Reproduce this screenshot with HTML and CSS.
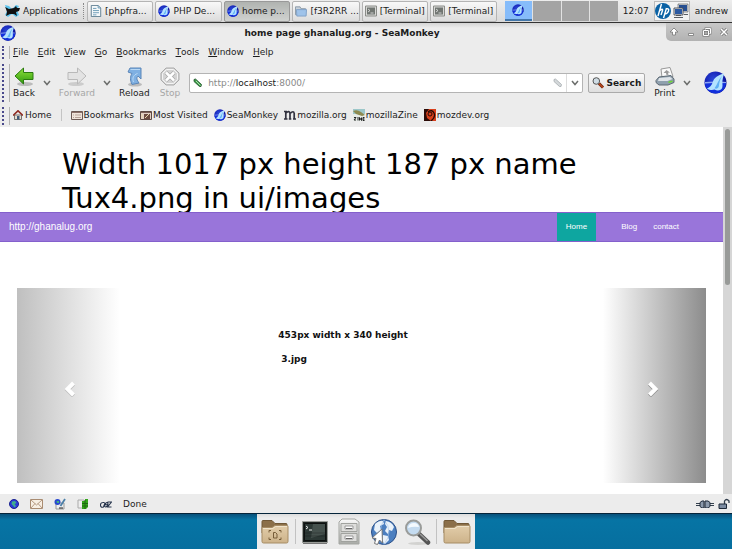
FILE: index.html
```html
<!DOCTYPE html>
<html lang="en">
<head>
<meta charset="utf-8">
<title>home page ghanalug.org - SeaMonkey</title>
<link rel="stylesheet" href="styles.css">
</head>
<body>
<svg class="defs" aria-hidden="true">
  <defs>
    <radialGradient id="sea" cx=".4" cy=".35" r=".7"><stop offset="0" stop-color="#2a48d8"/><stop offset=".6" stop-color="#1420b4"/><stop offset="1" stop-color="#0a0a78"/></radialGradient>
    <linearGradient id="green" x2="0" y2="1"><stop offset="0" stop-color="#8fe23c"/><stop offset="1" stop-color="#2f9a0c"/></linearGradient>
    <linearGradient id="tan" x2="0" y2="1"><stop offset="0" stop-color="#e2cdaa"/><stop offset="1" stop-color="#cdb38a"/></linearGradient>
    <linearGradient id="steel" x2="0" y2="1"><stop offset="0" stop-color="#fafafa"/><stop offset="1" stop-color="#a8aaa6"/></linearGradient>
  </defs>
  <symbol id="seamonkey" viewBox="0 0 24 24">
    <circle cx="12" cy="12" r="11.5" fill="url(#sea)"/>
    <path d="M1 12.500h22a11 11 0 0 1-22 0z" fill="#1230dc"/>
    <path d="M1 11.500l10-.5-1 1.500-9 .5zM17 11l6 .5v1l-7 .3z" fill="#8ea6f2"/>
    <path d="M21 2.500C15 4 10 7 9 12c-1 3-3 5-6 6.500 3 1.500 6 1.500 8 .8 3 2 7 1 8-1.800 1-3-.5-6 .5-9 .5-2.500 1-4 1.500-6z" fill="#b4e2ff"/>
    <path d="M19 5c-4 4-5 9-8 13 2 1 4 0 4.500-2 .5-4 1-7 3.500-11z" fill="#5fb0f4"/>
  </symbol>
  <symbol id="mouse" viewBox="0 0 16 16">
    <path d="M1 2l4 1 3 3 4-4 3 1-2 4 2 5-3 2-4-3-4 3-3-2 2-4z" fill="#5cc4ee"/>
    <path d="M1 4l4 2 5-1 2-2 1 2 3 0-1 3-3 1 1 4-3-2-4 0-4 2 1-4-1-3z" fill="#111"/>
  </symbol>
  <symbol id="document" viewBox="0 0 12 14">
    <path d="M.5.500h8l3 3v10H.500z" fill="#f4f8fa" stroke="#4f7388"/>
    <path d="M8.500.500v3h3M2.500 4h4M2.500 6.500h7M2.500 9h7M2.500 11.500h4" fill="none" stroke="#5f92b0"/>
  </symbol>
  <symbol id="bluefolder" viewBox="0 0 13 12">
    <path d="M.5 10V1.500h5l1 2h5v7z" fill="#c9d2da" stroke="#8796a4"/>
    <path d="M1.500 4.500h11l-.5 7H2z" fill="#9fc3ea" stroke="#7fa0c6"/>
  </symbol>
  <symbol id="term" viewBox="0 0 12 11">
    <path d="M.5.500h11v10H.500z" fill="#d8d8d6" stroke="#8a8c88"/><path d="M2 2h8v7H2z" fill="#717672"/><path d="M3 3.500l2 1.500-2 1.500M5.500 7.500h3" fill="none" stroke="#e8e8e8" stroke-width=".8"/>
  </symbol>
  <symbol id="chevron" viewBox="0 0 8 6"><path d="M1 1l3 3.500L7 1" fill="none" stroke="#6c6e6c" stroke-width="1.500"/></symbol>
  <symbol id="folder" viewBox="0 0 28 26">
    <path d="M1 14V2.500q0-1 1-1h9l3 3h11q1 0 1 1V14z" fill="#8b6f49" stroke="#705837"/>
    <path d="M1 8.500h10l3-2h12q1 0 1 1v15q0 1.500-1.500 1.500h-23Q1 24 1 22.500z" fill="url(#tan)" stroke="#a68c64"/>
    <path d="M2 9.500h10l2.500-2h11.500" fill="none" stroke="#f0e3ca"/>
  </symbol>
</svg>

<header class="panel">
  <button class="apps"><svg class="i16"><use href="#mouse"/></svg>Applications</button>
  <nav class="tasks" aria-label="Open windows">
    <button><svg class="i12"><use href="#document"/></svg>[phpfra...</button>
    <button><svg class="i12"><use href="#seamonkey"/></svg>PHP De...</button>
    <button class="active"><svg class="i12"><use href="#seamonkey"/></svg>home p...</button>
    <button><svg class="i12"><use href="#bluefolder"/></svg>[f3R2RR ...</button>
    <button><svg class="i12"><use href="#term"/></svg>[Terminal]</button>
    <button><svg class="i12"><use href="#term"/></svg>[Terminal]</button>
  </nav>
  <div class="pager"><span class="current"><svg class="i12"><use href="#seamonkey"/></svg></span><span></span><span></span><span></span></div>
  <time>12:07</time>
  <div class="tray">
    <svg class="i16" viewBox="0 0 16 16"><circle cx="8" cy="8" r="8" fill="#0b62a4"/><path d="M6.500 1L3 13M5 7.500q3-2.500 2.500 0L6 12M11.500 5L8.500 15M11 6q3.500-1 2.500 2t-4 3" fill="none" stroke="#fff" stroke-width="1.400"/></svg>
    <svg class="i16" viewBox="0 0 16 16"><path d="M5.500 1.500h9v7h-9z" fill="#254e92" stroke="#d5d9dc"/><path d="M5 1h10v8H5z" fill="none" stroke="#555" stroke-width=".6"/><path d="M1.500 5.500h8v6h-8z" fill="#2c5aa2" stroke="#e8e8e8"/><path d="M1 5h9v7H1zM3 12.500h5M1 14.500h9M11 11.500h4" fill="none" stroke="#454b52" stroke-width=".9"/></svg>
  </div>
  <span class="user">andrew</span>
</header>

<section class="window">
  <div class="titlebar">
    <svg class="i16"><use href="#seamonkey"/></svg>
    <h1>home page ghanalug.org - SeaMonkey</h1>
    <div class="controls">
      <button aria-label="Shade"><svg class="i10" viewBox="0 0 10 10"><path d="M5 1l4 4H6.500v3h-3V5H1z" fill="#fff" stroke="#777" stroke-width=".8"/></svg></button>
      <button aria-label="Minimize"><svg class="i10" viewBox="0 0 10 10"><path d="M2.500 6.500h5v2h-5z" fill="#fff" stroke="#777" stroke-width=".8"/></svg></button>
      <button aria-label="Restore"><svg class="i10" viewBox="0 0 10 10"><path d="M3.500 1.500h5v5h-5z" fill="none" stroke="#777" stroke-width="1.800"/><path d="M3.500 1.500h5v5h-5z" fill="none" stroke="#fff"/><path d="M1.500 3.500h5v5h-5z" fill="#aaa" stroke="#666" stroke-width="1.800"/><path d="M1.500 3.500h5v5h-5z" fill="none" stroke="#fff"/></svg></button>
      <button aria-label="Close"><svg class="i10" viewBox="0 0 10 10"><path d="M2 2l6 6M8 2L2 8" stroke="#707070" stroke-width="3"/><path d="M2 2l6 6M8 2L2 8" stroke="#fff" stroke-width="1.500"/></svg></button>
    </div>
  </div>

  <nav class="menubar grip" aria-label="Menu">
    <button><u>F</u>ile</button><button><u>E</u>dit</button><button><u>V</u>iew</button><button><u>G</u>o</button><button><u>B</u>ookmarks</button><button><u>T</u>ools</button><button><u>W</u>indow</button><button><u>H</u>elp</button>
  </nav>

  <div class="toolbar grip">
    <button class="tool"><svg class="i20" viewBox="0 0 20 20"><ellipse cx="11" cy="17" rx="8" ry="2" fill="#bbb"/><path d="M1 9l8.500-8v4.500H19v7H9.500V17z" fill="url(#green)" stroke="#2a7a10"/></svg>Back</button>
    <button class="drop" aria-label="Back history"><svg class="chev"><use href="#chevron"/></svg></button>
    <button class="tool off forward"><svg class="i20" viewBox="0 0 20 20"><ellipse cx="9" cy="17" rx="8" ry="2" fill="#ccc"/><path d="M19 9l-8.500-8v4.500H1v7h9.500V17z" fill="#e3e3e3" stroke="#b9b9b9"/></svg>Forward</button>
    <button class="drop" aria-label="Forward history"><svg class="chev"><use href="#chevron"/></svg></button>
    <button class="tool reload"><svg class="i20" viewBox="0 0 20 20"><ellipse cx="11" cy="17.500" rx="7" ry="2" fill="#bbb"/><path d="M4 5l2-4h11v11l-3-3c-2 2-1 4 1 7l-7 1.500c-2-4-2-8 0-11z" fill="#7fb0e2" stroke="#5b86b8"/><path d="M6.500 2.500H16M9.500 15c-1.500-4 0-7 4-8.500" fill="none" stroke="#b9d8f4"/></svg>Reload</button>
    <button class="tool off stop"><svg class="i20" viewBox="0 0 20 20"><path d="M6 1h8l5 5v7l-5 5H6l-5-5V6z" fill="#d4d4d4" stroke="#aaa"/><path d="M6.500 2.500h7L17.500 6.500v6l-4 4h-7l-4-4v-6z" fill="none" stroke="#f4f4f4"/><path d="M6 5.500l8 8M14 5.500l-8 8" stroke="#aaa" stroke-width="4"/><path d="M6 5.500l8 8M14 5.500l-8 8" stroke="#fff" stroke-width="2.500"/></svg>Stop</button>
    <div class="address">
      <svg class="i10" viewBox="0 0 10 10"><path d="M1 1.500l1.500-.5 6 5.500-.5 2-1.500 0L1 3.500z" fill="#3f9d4b" stroke="#1f4f2a" stroke-width=".8"/><path d="M3 3l4.500 4.500" stroke="#a8e0a8"/></svg>
      <label class="url"><span class="url-text" aria-hidden="true">http://<b>localhost</b>:8000/</span><input type="text" aria-label="Address" value="http://localhost:8000/"></label>
      <svg class="i10" viewBox="0 0 10 10"><path d="M1 1.500l1.500-.5 6 5.500-.5 2-1.500 0L1 3.500z" fill="#d4d8da" stroke="#a5abae" stroke-width=".8"/></svg>
      <button class="drop" aria-label="Show history"><svg class="chev"><use href="#chevron"/></svg></button>
    </div>
    <button class="search"><svg class="i12" viewBox="0 0 12 12"><path d="M7 6.500l4 4" stroke="#5a1d0a" stroke-width="3"/><path d="M7 6.500l4 4" stroke="#b1441c" stroke-width="1.800"/><circle cx="4.300" cy="4" r="3.300" fill="#cfdce4" stroke="#555"/></svg>Search</button>
    <button class="tool print"><svg class="i20" viewBox="0 0 20 20"><path d="M6 2l9-1.500 3 9-11 1z" fill="#fafafa" stroke="#999"/><path d="M8.500 6l3-3 3.500 2.500-2 .3.5 2-2 .3-.5-2z" fill="#9a9a9a"/><path d="M4 10l12-1.500 3 3.500v3.500L13 18H4l-3-2.500v-2z" fill="#8fa0ae" stroke="#5e6a74"/><path d="M4 11l11-1 2.500 2-5 2H3z" fill="#dfe4e8"/><path d="M13.500 14.500l4-1v1.500l-4 1z" fill="#6cdc2c"/></svg>Print</button>
    <button class="drop" aria-label="Print options"><svg class="chev"><use href="#chevron"/></svg></button>
    <svg class="throbber"><use href="#seamonkey"/></svg>
  </div>

  <nav class="bookmarks grip" aria-label="Bookmarks">
    <a href="#" class="home"><svg class="i10" viewBox="0 0 10 10"><path d="M1.500 5h7v4.500h-7z" fill="#e9ddd0" stroke="#555" stroke-width=".8"/><path d="M0 5.500L5 .8l5 4.700" fill="none" stroke="#8e2820" stroke-width="1.600"/><path d="M4 6h2.500v3.500H4z" fill="#3e5878"/></svg>Home</a>
    <a href="#"><svg class="i12" viewBox="0 0 12 12"><path d="M.5 2.500h11v8H.500z" fill="#f0e4da" stroke="#6d5a54"/><path d="M1 3.500h10" stroke="#8c6f68"/><path d="M2 6h1M4 6h6M2 8.500h1M4 8.500h6" stroke="#b7a298"/></svg>Bookmarks</a>
    <a href="#"><svg class="i12" viewBox="0 0 12 12"><path d="M.5 2.500h11v8H.500z" fill="#e0cfc4" stroke="#5d4a44"/><path d="M1 3.500h10" stroke="#7c5f58"/><path d="M4 5h6v5H4z" fill="#6b4a40"/><path d="M5 9l4-4M2 5v4" stroke="#e8d8b0"/></svg>Most Visited</a>
    <a href="#"><svg class="i12"><use href="#seamonkey"/></svg>SeaMonkey</a>
    <a href="#"><svg class="i12" viewBox="0 0 12 12"><path d="M0 2.500h3M1.800 2v8M0 10h3.500M6 4v6M4.800 10h2.500M10.200 4v6M9 10h3M1.800 4Q5.500 1 6 4.500 9.700 1 10.200 4.500" fill="none" stroke="#333340" stroke-width="1.700"/></svg>mozilla.org</a>
    <a href="#"><svg class="i12" viewBox="0 0 12 12"><path d="M0 0h12v12H0z" fill="#e6ece8"/><path d="M0 0h12v5H0z" fill="#9cc7c9"/><path d="M0 2q4-2 8 1l4 3-3 1-6-2z" fill="#8d8a50"/><path d="M1 8.500h2l-2 2.500h2M5 8v3.500M6.500 11.500v-3l2 3v-3M11.500 8.500H10v3h1.500M10 10h1.500" fill="none" stroke="#222"/></svg>mozillaZine</a>
    <a href="#"><svg class="i12" viewBox="0 0 12 12"><path d="M0 0h12v12H0z" fill="#d8401c"/><path d="M0 0h5L2 4l1 5 4 3H0z" fill="#2a0b07"/><path d="M4 3q4-3 6 1t-3 8" fill="none" stroke="#230a06" stroke-width="1.300"/><circle cx="6" cy="5" r="2" fill="none" stroke="#230a06"/></svg>mozdev.org</a>
  </nav>

  <div class="viewport">
    <main class="page">
      <h2>Width 1017 px height 187 px name Tux4.png in ui/images</h2>
      <nav class="sitenav" aria-label="Site">
        <a href="#" class="brand">http://ghanalug.org</a>
        <a href="#" class="here">Home</a>
        <a href="#">Blog</a>
        <a href="#">contact</a>
      </nav>
      <section class="carousel">
        <a href="#" class="side prev" aria-label="Previous"><svg class="arrow" viewBox="0 0 12 16"><path d="M9.500 2L3.500 8l6 6" fill="none" stroke="#888" stroke-width="4" opacity=".4" transform="translate(0 1)"/><path d="M9.500 2L3.500 8l6 6" fill="none" stroke="#fff" stroke-width="4"/></svg></a>
        <div class="slide"><p>453px width x 340 height</p><p class="file">3.jpg</p></div>
        <a href="#" class="side next" aria-label="Next"><svg class="arrow" viewBox="0 0 12 16"><path d="M2.500 2l6 6-6 6" fill="none" stroke="#555" stroke-width="4" opacity=".5" transform="translate(0 1)"/><path d="M2.500 2l6 6-6 6" fill="none" stroke="#fff" stroke-width="4"/></svg></a>
      </section>
    </main>
    <div class="scrollbar"><div class="thumb"></div></div>
  </div>

  <footer class="status">
    <svg class="i10" viewBox="0 0 10 10"><circle cx="5" cy="5" r="4.500" fill="#2a3ad8" stroke="#1c2490"/><path d="M3 2.500l3-.5 1.500 2-2 1 1.500 2-1.500 1.500L4 6.500 2.500 5z" fill="#3fae8c"/></svg>
    <svg class="mail" viewBox="0 0 13 10"><path d="M.5.500h12v9H.500z" fill="#f8efe4" stroke="#a98c72"/><path d="M1 1l5.500 5L12 1M1 9l4-4.500M12 9L8 4.500" fill="none" stroke="#b59a82"/></svg>
    <svg class="i12" viewBox="0 0 12 12"><path d="M2 5h8v6H2z" fill="#eee" stroke="#999"/><circle cx="3.500" cy="4" r="3" fill="#2848d0"/><path d="M2.500 3h2.500v2h-2z" fill="#40b080"/><path d="M11 1L6.500 8" stroke="#4a7fa8" stroke-width="1.800"/><path d="M5 10h4" stroke="#222"/></svg>
    <svg class="i12" viewBox="0 0 12 12"><path d="M1 2h6v8H1z" fill="#eee" stroke="#aaa"/><path d="M5 3h3V1h3v8l-2 2H5z" fill="#34a51c"/><path d="M5 5.500h6M5 8h6M8 2v9" stroke="#1c6a10"/></svg>
    <svg class="i12" viewBox="0 0 12 12"><path d="M4.500 4.500Q.500 4 .500 7t3 2L5 5Q4 9 5.500 9q2-.5 3-2.500M5.500 7Q9 6.500 7.500 4.500 5.500 4 5.500 7M7.500 4h4l-4 5h4" fill="none" stroke="#26344c" stroke-width="1.100"/></svg>
    <span class="done">Done</span>
    <svg class="plug" viewBox="0 0 18 8"><path d="M0 3.500h5M0 5.500h5M13 3.500h5M13 5.500h5" stroke="#34404e"/><path d="M4 2.500l2-1.500h2v7H6L4 6.500zM9 1h3l2 1.500v4L12 8H9z" fill="#8c9aac" stroke="#1c2838"/></svg>
    <svg class="i12" viewBox="0 0 12 12"><path d="M6.500 6V3q2-3 4.500 0v2" fill="none" stroke="#34404e" stroke-width="1.300"/><path d="M1 6h7.500v4.500H1z" fill="#7c8ca2" stroke="#1c2838"/></svg>
  </footer>
</section>

<div class="desktop">
  <nav class="dock" aria-label="Launcher">
    <button aria-label="Desktop"><svg class="i28"><use href="#folder"/></svg><svg class="mark" viewBox="0 0 14 10"><path d="M1 2.500V.500h2M11 .5h2v2M1 7.500v2h2M11 9.500h2v-2M5.500 2.500h2l1.500 1.500v4H5.500z" fill="none" stroke="#765c38"/></svg></button>
    <span class="rule"></span>
    <button aria-label="Terminal"><svg class="i28" viewBox="0 0 28 28"><path d="M1.500 3.500h25v21h-25z" fill="#1d2321" stroke="#9a9c98"/><path d="M2 25.500h24" stroke="#777"/><path d="M3.500 5.500h21v17h-21z" fill="#2c3835" stroke="#0d100f"/><path d="M12 6h12v10L10 20z" fill="#53605a" opacity=".65"/><path d="M5 8l2 1.500L5 11M8 12h3" fill="none" stroke="#eee"/><path d="M4 15h20M4 18h20" stroke="#111" opacity=".3"/></svg></button>
    <button aria-label="File manager"><svg class="i28" viewBox="0 0 28 28"><path d="M7 1h13l4 3v22H4V4z" fill="url(#steel)" stroke="#a4a6a2"/><path d="M6 5.500h16v8H6zM6 15.500h16v8H6z" fill="#dededc" stroke="#a0a29e"/><path d="M10 8h8v3h-8zM10 18h8v3h-8z" fill="#fff" stroke="#999"/><path d="M11 10.500h6M11 20.500h6" stroke="#666"/></svg></button>
    <button aria-label="Web browser"><svg class="i28" viewBox="0 0 28 28"><circle cx="15" cy="14" r="12.500" fill="#4c7fc0" stroke="#2a4f88"/><path d="M6 6q5-4 8-3l1 3-4 2 1 4-4 3-3-3zM17 3q6 1 8 6l-2 4-3-1-1 4-3-3 2-4-2-3zM14 17l5 1 1 4-4 4-3-3z" fill="#eaf2fa"/><path d="M15 1.500q-7 12 0 25M15 1.500q10 12 0 25" fill="none" stroke="#a9c4e4" stroke-width=".6"/><path d="M13 11L3 20l4 .5-1.500 5 3 1 2-4.500 3 3z" fill="#fff" stroke="#777"/></svg></button>
    <button aria-label="Find"><svg class="i28" viewBox="0 0 28 28"><ellipse cx="15" cy="25.500" rx="10" ry="1.500" fill="#d2d2d0"/><path d="M16 16l9 8.500" stroke="#555" stroke-width="4.500" stroke-linecap="round"/><path d="M17 16l7.500 7" stroke="#999" stroke-width="1.500"/><circle cx="10.500" cy="10" r="7.500" fill="#c4dbf0" stroke="#9a9c9a" stroke-width="2"/><path d="M5 10q1-5 6-5 4 0 5 4-6-1-11 1z" fill="#f4faff"/></svg></button>
    <span class="rule"></span>
    <button aria-label="Home folder"><svg class="i28"><use href="#folder"/></svg></button>
  </nav>
</div>
</body>
</html>
```

FILE: styles.css
```css
* { box-sizing: border-box; }
body {
  margin: 0;
  height: 100vh;
  display: flex;
  flex-direction: column;
  overflow: hidden;
  font: 9px/12px "DejaVu Sans", sans-serif;
  color: #1c1c1c;
  background: #0670a0;
}
button {
  font: inherit;
  color: inherit;
  padding: 0;
  border: 0;
  background: none;
  display: flex;
  align-items: center;
  white-space: nowrap;
}
a { color: inherit; text-decoration: none; }
svg { display: block; flex: none; }
.defs { position: absolute; width: 0; height: 0; }
.i10 { width: 10px; height: 10px; }
.i12 { width: 12px; height: 12px; }
.i16 { width: 16px; height: 16px; }
.i20 { width: 20px; height: 20px; }
.i28 { width: 28px; height: 28px; }
.chev { width: 8px; height: 6px; }

/* Desktop panel */
.panel {
  display: flex;
  align-items: center;
  height: 23px;
  flex: none;
  padding: 0 4px;
  background: linear-gradient(#ededed, #d9d9d9);
  border-bottom: 1px solid #333;
}
.apps {
  gap: 3px;
  height: 16px;
  padding-right: 5px;
  border-right: 1px dotted #888;
}
.tasks {
  flex: 1;
  display: grid;
  grid-template-columns: repeat(6, 1fr);
  gap: 2px;
  margin-left: 3px;
}
.tasks button {
  height: 21px;
  gap: 3px;
  padding-left: 2px;
  border: 1px solid #b4b4b4;
  border-radius: 2px;
  background: linear-gradient(#f8f8f8, #dcdcdc);
}
.tasks .active { background: linear-gradient(#b0b3b0, #d0d2d0); border-color: #999; }
.pager {
  display: grid;
  grid-template-columns: repeat(4, 1fr);
  gap: 1px;
  width: 113px;
  height: 20px;
  margin-left: 8px;
  background: #e2e2e2;
}
.pager span { background: #a4a4a4; display: grid; place-items: center; }
.pager .current { background: #86bcfa; border-bottom: 2px solid #4376a8; }
time { margin: 0 5px; }
.tray {
  display: flex;
  gap: 2px;
  padding: 1px 0;
  border: 1px solid #bbb;
  background: #f3f3f3;
}
.user { margin-left: 5px; }

/* Browser window */
.window {
  flex: 1;
  min-height: 0;
  display: flex;
  flex-direction: column;
  background: #ececec;
  border-bottom: 1px solid #05243a;
}
.titlebar {
  display: grid;
  grid-template-columns: 60px 1fr 60px;
  height: 20px;
  background: linear-gradient(#d4d4d4, #ececec 5px);
}
.titlebar > svg { margin: 2px 0 0; }
.titlebar h1 {
  margin: 4px 0 0;
  font-size: 9px;
  line-height: 12px;
  text-align: center;
  padding-right: 48px;
}
.controls {
  display: flex;
  align-items: center;
  justify-content: space-around;
  width: 66px;
  height: 18px;
  justify-self: end;
  background: linear-gradient(#c8c8c8, #b2b2b2);
  border-bottom-left-radius: 5px;
}
.grip { position: relative; display: flex; align-items: center; padding-left: 13px; }
.grip::before {
  content: "";
  position: absolute;
  left: 2px;
  top: 3px;
  bottom: 2px;
  width: 5px;
  border-left: 2px dotted #4a4a8c;
  border-right: 1px solid #b4b4b4;
}
.menubar { height: 18px; gap: 9px; }
.toolbar { height: 43px; padding-right: 5px; }
.tool { flex-direction: column; gap: 1px; line-height: 10px; }
.off { color: #a6a6a6; }
.forward, .reload { margin-left: 4px; }
.stop { margin-left: 10px; }
.drop { width: 16px; justify-content: center; }
.tool + .drop { margin-left: 4px; }
.address {
  flex: 1;
  display: flex;
  align-items: center;
  height: 20px;
  margin: 0 5px 0 9px;
  padding-left: 3px;
  background: #fff;
  border: 1px solid #b4b4b4;
  border-radius: 2px;
}
.address .drop { height: 18px; border-left: 1px solid #ddd; margin-left: 3px; }
.url { flex: 1; display: grid; margin-left: 5px; color: #8a8a8a; }
.url b { font-weight: normal; color: #1c1c1c; }
.url-text, .url input { grid-area: 1 / 1; }
.url-text { pointer-events: none; }
.url input {
  width: 100%;
  padding: 0;
  border: 0;
  font: inherit;
  color: transparent;
  background: none;
}
.search {
  gap: 2px;
  height: 20px;
  padding: 0 3px;
  font-weight: bold;
  border: 1px solid #aaa;
  border-radius: 2px;
  background: linear-gradient(#fafafa, #dedede);
}
.print { margin-left: 9px; }
.throbber { width: 23px; height: 23px; margin-left: 9px; }
.bookmarks { height: 23px; gap: 6px; padding-bottom: 2px; }
.bookmarks a { display: flex; align-items: center; gap: 1px; }
.bookmarks .home { gap: 2px; padding-right: 9px; margin-right: 3px; border-right: 1px solid #c4c4c4; }

/* Page */
.viewport { flex: 1; min-height: 0; display: flex; }
.page {
  flex: 1;
  min-width: 0;
  display: flex;
  flex-direction: column;
  overflow: hidden;
  background: #fff;
}
.page h2 {
  margin: 0;
  padding: 20px 62px 0;
  font-size: 29px;
  line-height: 34px;
  font-weight: normal;
  color: #000;
}
.sitenav {
  position: relative;
  display: flex;
  height: 30px;
  flex: none;
  margin-top: -3px;
  padding-right: 36px;
  background: #9975da;
  border: solid #8460cc;
  border-width: 1px 0;
  color: #fff;
  font: 8px/28px "Liberation Sans", sans-serif;
}
.sitenav a { padding: 0 8px; }
.sitenav .brand { margin-right: auto; padding-left: 9px; font-size: 10px; }
.sitenav .here { padding: 0 9px; margin-right: 17px; background: #0ea6a0; }
.carousel {
  flex: 1;
  display: grid;
  grid-template-columns: 15% 1fr 15%;
  margin: 46px 17px 11px;
}
.side { display: grid; place-items: center; padding-top: 6px; }
.prev { padding-left: 2px; background: linear-gradient(90deg, #bfbfbf, #fff); }
.next { padding-right: 2px; background: linear-gradient(90deg, #fff, #8c8c8c); }
.arrow { width: 12px; height: 16px; }
.slide { padding: 41px 0 0 158px; font-weight: bold; color: #111; }
.slide p { margin: 0 0 12px; }
.slide .file { padding-left: 3px; }
.scrollbar { width: 9px; padding: 2px; background: #d6d6d6; }
.thumb { height: 43%; border-radius: 3px; background: #989a98; }

.status {
  display: flex;
  align-items: center;
  gap: 11px;
  height: 19px;
  padding: 0 2px 0 9px;
}
.mail { width: 13px; height: 10px; }
.done { margin-right: auto; }
.plug { width: 18px; height: 8px; margin-right: -7px; }

/* Desktop and dock */
.desktop {
  height: 35px;
  flex: none;
  display: flex;
  justify-content: center;
  background: linear-gradient(#07507a, #0674a4 6px, #066f9f);
}
.dock {
  display: flex;
  align-items: center;
  justify-content: space-between;
  width: 218px;
  padding: 0 4px;
  background: linear-gradient(#dcdcdc, #ececec 4px);
}
.dock button { position: relative; }
.mark { position: absolute; left: 7px; top: 12px; width: 14px; height: 10px; }
.rule { width: 1px; height: 25px; background: #c2c2c2; }
```
